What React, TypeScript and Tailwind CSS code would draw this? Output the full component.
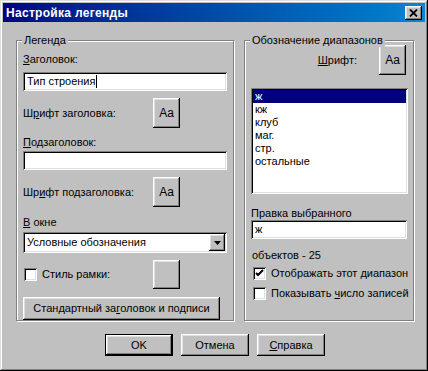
import React from "react";

const raised =
  "bg-[#c0c0c0] shadow-[inset_-1px_-1px_0_#000,inset_1px_1px_0_#fff,inset_-2px_-2px_0_#808080,inset_2px_2px_0_#dfdfdf]";
const sunken =
  "bg-white shadow-[inset_1px_1px_0_#808080,inset_-1px_-1px_0_#fff,inset_2px_2px_0_#000,inset_-2px_-2px_0_#dfdfdf]";

const U = ({ children }: { children: React.ReactNode }) => <span className="underline underline-offset-[1px]">{children}</span>;

const Label = ({ className = "", children }: { className?: string; children: React.ReactNode }) => (
  <div className={`h-[13px] leading-[13px] whitespace-nowrap ${className}`}>{children}</div>
);

const FontButton = ({ text = "Aa", className = "" }: { text?: string; className?: string }) => (
  <div className={`${raised} w-[27px] h-[30px] flex items-center justify-center text-[12px] ${className}`}>{text}</div>
);

const Check = ({ checked = false }: { checked?: boolean }) => (
  <div className={`${sunken} w-[13px] h-[13px] shrink-0 flex items-center justify-center`}>
    {checked && (
      <svg width="9" height="9" viewBox="0 0 9 9">
        <path d="M1 4 L3 6 L8 1" stroke="#000" strokeWidth="2" fill="none" />
      </svg>
    )}
  </div>
);

const Group = ({ title, className = "", children }: { title: string; className?: string; children: React.ReactNode }) => (
  <div className={`relative border border-[#808080] shadow-[inset_1px_1px_0_#fff,1px_1px_0_#fff] ${className}`}>
    <span className="absolute -top-[7px] left-[5px] px-[2px] bg-[#c0c0c0] leading-[13px]">{title}</span>
    {children}
  </div>
);

export default function App() {
  const items = ["кж", "клуб", "маг.", "стр.", "остальные"];

  return (
    <div className="w-[428px] h-[371px] bg-[#c0c0c0] p-[3px] flex flex-col text-[11px] text-black font-['Liberation_Sans',Arial,sans-serif] shadow-[inset_-1px_-1px_0_#000,inset_1px_1px_0_#dfdfdf,inset_-2px_-2px_0_#808080,inset_2px_2px_0_#fff]">
      {/* title bar */}
      <div className="h-[19px] flex items-center justify-between pl-[3px] pr-[3px] bg-gradient-to-r from-[#000080] to-[#1084d0]">
        <span className="text-white font-bold text-[12px] tracking-[0.3px]">Настройка легенды</span>
        <div className={`${raised} w-[17px] h-[14px] flex items-center justify-center`}>
          <svg width="9" height="8" viewBox="0 0 9 8">
            <path d="M1 0.5 L8 7.5 M8 0.5 L1 7.5" stroke="#000" strokeWidth="1.8" />
          </svg>
        </div>
      </div>

      <div className="flex gap-[10px] pl-[13px] pt-[18px]">
        {/* left group */}
        <Group title="Легенда" className="w-[218px] h-[281px] pl-[6px] pt-[12px] flex flex-col">
          <Label><U>З</U>аголовок:</Label>
          <div className={`${sunken} mt-[6px] w-[204px] h-[19px] pl-[4px] flex items-center`}>
            Тип строения<span className="inline-block w-[1px] h-[13px] bg-black ml-[1px]" />
          </div>
          <div className="mt-[7px] flex items-center">
            <Label className="w-[130px]">Ш<U>р</U>ифт заголовка:</Label>
            <FontButton />
          </div>
          <Label className="mt-[8px]"><U>П</U>одзаголовок:</Label>
          <div className={`${sunken} mt-[2px] w-[204px] h-[19px]`} />
          <div className="mt-[7px] flex items-center">
            <Label className="w-[130px]">Шр<U>и</U>фт подзаголовка:</Label>
            <FontButton />
          </div>
          <Label className="mt-[9px]"><U>В</U> окне</Label>
          <div className={`${sunken} mt-[3px] w-[204px] h-[21px] pl-[4px] pr-[2px] flex items-center justify-between`}>
            <span>Условные обозначения</span>
            <div className={`${raised} w-[16px] h-[17px] flex items-center justify-center`}>
              <svg width="7" height="4" viewBox="0 0 7 4">
                <path d="M0 0 H7 L3.5 4 Z" fill="#000" />
              </svg>
            </div>
          </div>
          <div className="mt-[7px] flex items-center">
            <div className="w-[130px] flex items-center gap-[5px] pl-[1px]">
              <Check />
              <Label>Стиль рамки:</Label>
            </div>
            <div className={`${raised} w-[27px] h-[29px]`} />
          </div>
          <div className={`${raised} mt-[8px] w-[197px] h-[23px] flex items-center justify-center`}>
            Стандартный за<U>г</U>оловок и подписи
          </div>
        </Group>

        {/* right group */}
        <Group title="Обозначение диапазонов" className="w-[170px] h-[281px] pl-[6px] pt-[4px] flex flex-col">
          <div className="flex items-center justify-end pr-[7px] gap-[22px]">
            <Label><U>Ш</U>рифт:</Label>
            <FontButton className="h-[29px]" />
          </div>
          <div className={`${sunken} mt-[13px] w-[157px] h-[106px] p-[2px] flex flex-col`}>
            <div className="h-[13px] leading-[13px] bg-[#000080] text-white pl-[2px]">ж</div>
            {items.map((it) => (
              <div key={it} className="h-[13px] leading-[13px] pl-[2px]">{it}</div>
            ))}
          </div>
          <Label className="mt-[13px]">Правка выбранного</Label>
          <div className={`${sunken} w-[156px] h-[19px] pl-[4px] flex items-center`}>ж</div>
          <Label className="mt-[10px] pl-[1px]">объектов - 25</Label>
          <div className="mt-[5px] flex items-center gap-[5px] pl-[2px]">
            <Check checked />
            <Label>Отображать этот диапазон</Label>
          </div>
          <div className="mt-[7px] flex items-center gap-[5px] pl-[2px]">
            <Check />
            <Label>Показывать <U>ч</U>исло записей</Label>
          </div>
        </Group>
      </div>

      {/* buttons */}
      <div className="mt-[13px] pl-[102px] flex gap-[8px]">
        <div className="border border-black w-[68px] h-[22px]">
          <div className={`${raised} w-full h-full flex items-center justify-center`}>OK</div>
        </div>
        <div className={`${raised} w-[68px] h-[22px] flex items-center justify-center`}>Отмена</div>
        <div className={`${raised} w-[68px] h-[22px] flex items-center justify-center`}><U>С</U>правка</div>
      </div>
    </div>
  );
}
